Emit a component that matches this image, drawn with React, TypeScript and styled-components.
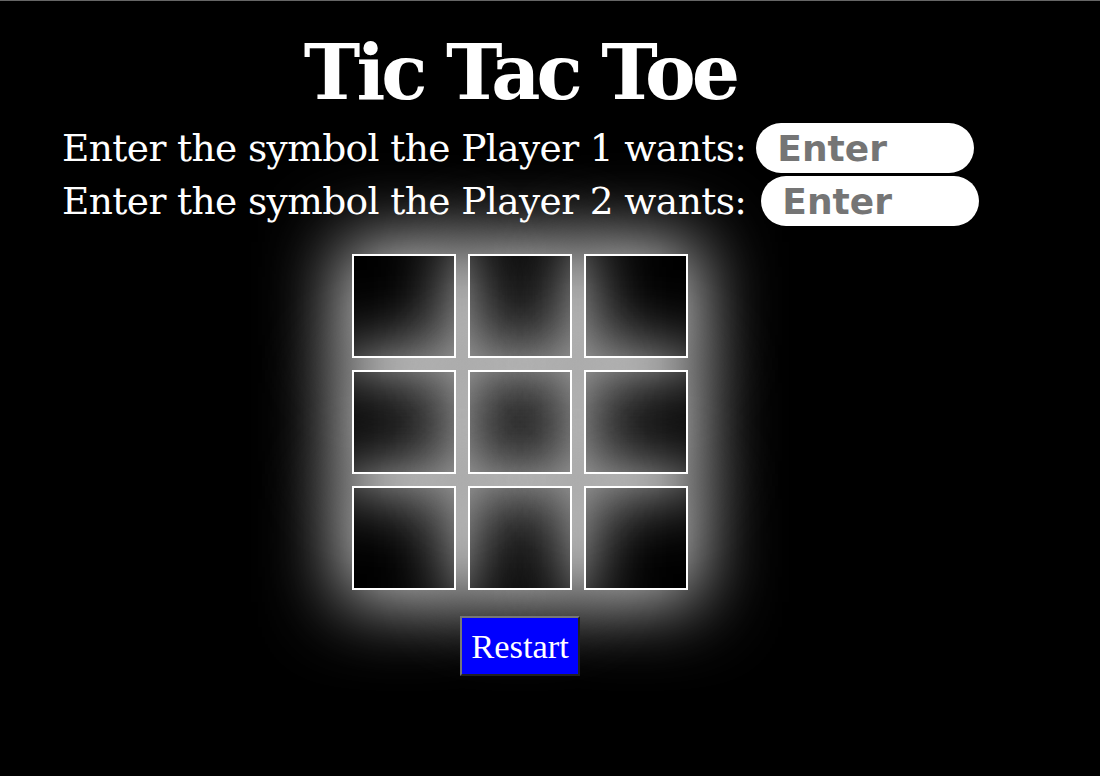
import React from 'react';
import styled, { createGlobalStyle } from 'styled-components';

const GlobalStyle = createGlobalStyle`
  html, body {
    margin: 0;
    padding: 0;
    background: #000;
  }
  body {
    border-top: 1px solid #666;
    min-height: 775px;
    font-family: 'DejaVu Serif', serif;
    color: #fff;
  }
`;

const Page = styled.div`
  width: 1040px;
  display: flex;
  flex-direction: column;
  align-items: center;
`;

const Title = styled.h1`
  margin: 24px 0 0;
  font-size: 76px;
  line-height: 96px;
  font-weight: bold;
  letter-spacing: -4px;
`;

const Prompts = styled.div`
  align-self: stretch;
  padding-left: 62px;
  margin-top: 2px;
  display: flex;
  flex-direction: column;
  gap: 3px;
`;

const PromptRow = styled.label<{ $gap: number }>`
  display: flex;
  align-items: center;
  gap: ${(p) => p.$gap}px;
  font-size: 37.5px;
  line-height: 50px;
  letter-spacing: -0.6px;
`;

const SymbolInput = styled.input`
  width: 218px;
  height: 50px;
  box-sizing: border-box;
  border: none;
  border-radius: 25px;
  background: #fff;
  padding: 0 21px;
  font-family: 'Comic Sans MS', 'DejaVu Sans', sans-serif;
  font-weight: bold;
  font-size: 36px;
  color: #000;
  outline: none;

  &::placeholder {
    color: #757575;
  }
`;

const Board = styled.div`
  margin-top: 28px;
  display: grid;
  grid-template-columns: repeat(3, 104px);
  grid-auto-rows: 104px;
  gap: 12px;
`;

const Cell = styled.button`
  box-sizing: border-box;
  border: 2px solid #fff;
  background: transparent;
  box-shadow: 0 0 75px 12px rgba(255, 255, 255, 0.78);
  padding: 0;
  color: #fff;
  font-size: 60px;
  cursor: pointer;
`;

const RestartButton = styled.button`
  margin-top: 26px;
  height: 60px;
  padding: 0 9px;
  background: #0000ff;
  color: #fff;
  border: 2px outset #767676;
  font-family: 'Liberation Serif', serif;
  font-size: 34.5px;
  cursor: pointer;
`;

const App = () => {
  const [cells, setCells] = React.useState<string[]>(Array(9).fill(''));
  const [p1, setP1] = React.useState('');
  const [p2, setP2] = React.useState('');
  const [turn, setTurn] = React.useState(0);

  const play = (i: number) => {
    if (cells[i]) return;
    const next = [...cells];
    next[i] = turn === 0 ? p1 || 'X' : p2 || 'O';
    setCells(next);
    setTurn(1 - turn);
  };

  return (
    <>
      <GlobalStyle />
      <Page>
        <Title>Tic Tac Toe</Title>
        <Prompts>
          <PromptRow $gap={10}>
            Enter the symbol the Player 1 wants:
            <SymbolInput
              placeholder="Enter"
              value={p1}
              onChange={(e) => setP1(e.target.value)}
            />
          </PromptRow>
          <PromptRow $gap={15}>
            Enter the symbol the Player 2 wants:
            <SymbolInput
              placeholder="Enter"
              value={p2}
              onChange={(e) => setP2(e.target.value)}
            />
          </PromptRow>
        </Prompts>
        <Board>
          {cells.map((c, i) => (
            <Cell key={i} onClick={() => play(i)}>
              {c}
            </Cell>
          ))}
        </Board>
        <RestartButton
          onClick={() => {
            setCells(Array(9).fill(''));
            setTurn(0);
          }}
        >
          Restart
        </RestartButton>
      </Page>
    </>
  );
};

export default App;
